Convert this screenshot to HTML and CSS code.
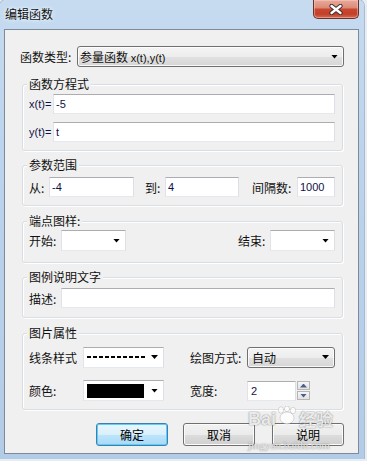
FILE: index.html
```html
<!DOCTYPE html>
<html lang="zh-CN">

<head>
  <meta charset="UTF-8">
  <meta name="viewport" content="width=device-width, initial-scale=1.0">
  <title>编辑函数</title>
  <link rel="stylesheet" href="styles.css">
</head>

<body>
  <div class="window">
    <div class="titlebar">
      <span class="title">编辑函数</span>
      <button class="close-btn" type="button">
        <svg width="14" height="11" viewBox="0 0 14 11">
          <path d="M2.5 2 L11.5 9 M11.5 2 L2.5 9" stroke="#3a2c2c" stroke-width="4.2" stroke-linecap="round" fill="none" />
          <path d="M2.5 2 L11.5 9 M11.5 2 L2.5 9" stroke="#fff" stroke-width="2.4" stroke-linecap="round" fill="none" />
        </svg>
      </button>
    </div>

    <div class="client">
      <!-- function type -->
      <div class="type-row">
        <span class="type-label">函数类型:</span>
        <div class="combo btn-combo type-combo">
          <span>参量函数 <span class="latin">x(t),y(t)</span></span>
          <i class="arrow"></i>
        </div>
      </div>

      <!-- equations -->
      <div class="group group-eq">
        <div class="group-title">函数方程式</div>
        <div class="row">
          <span class="eq-label latin">x(t)=</span>
          <input class="edit eq-edit" type="text" value="-5">
        </div>
        <div class="row row-second">
          <span class="eq-label latin">y(t)=</span>
          <input class="edit eq-edit" type="text" value="t">
        </div>
      </div>

      <!-- parameter range -->
      <div class="group group-range">
        <div class="group-title">参数范围</div>
        <div class="row">
          <span class="range-label">从:</span>
          <input class="edit from-edit" type="text" value="-4">
          <span class="range-label to-label">到:</span>
          <input class="edit to-edit" type="text" value="4">
          <span class="step-label">间隔数:</span>
          <input class="edit step-edit" type="text" value="1000">
        </div>
      </div>

      <!-- end point style -->
      <div class="group group-ends">
        <div class="group-title">端点图样:</div>
        <div class="row row-split">
          <div class="pair">
            <span class="short-label">开始:</span>
            <div class="combo end-combo"><span></span><i class="arrow"></i></div>
          </div>
          <div class="pair">
            <span class="short-label">结束:</span>
            <div class="combo end-combo"><span></span><i class="arrow"></i></div>
          </div>
        </div>
      </div>

      <!-- legend text -->
      <div class="group group-legend">
        <div class="group-title">图例说明文字</div>
        <div class="row">
          <span class="short-label">描述:</span>
          <input class="edit desc-edit" type="text" value="">
        </div>
      </div>

      <!-- picture properties -->
      <div class="group group-props">
        <div class="group-title">图片属性</div>
        <div class="row">
          <span class="prop-label">线条样式</span>
          <div class="combo prop-combo">
            <span class="dash-line"></span>
            <i class="arrow"></i>
          </div>
          <span class="prop-label2">绘图方式:</span>
          <div class="combo btn-combo draw-combo">
            <span>自动</span>
            <i class="arrow"></i>
          </div>
        </div>
        <div class="row row-color">
          <span class="prop-label">颜色:</span>
          <div class="combo prop-combo color-combo">
            <span class="swatch"></span>
            <i class="arrow"></i>
          </div>
          <span class="prop-label2">宽度:</span>
          <input class="edit width-edit" type="text" value="2">
          <div class="spin">
            <span class="spin-btn"><i class="spin-up"></i></span>
            <span class="spin-btn"><i class="spin-down"></i></span>
          </div>
        </div>
      </div>

      <div class="buttons">
        <button class="btn btn-default" type="button">确定</button>
        <button class="btn btn-cancel" type="button">取消</button>
        <button class="btn btn-help" type="button">说明</button>
      </div>
    </div>

    <!-- watermark of the screenshot source -->
    <div class="watermark">
      <div class="wm-logo">
        <span>Bai</span>
        <svg width="22" height="20" viewBox="0 0 22 20">
          <ellipse cx="5" cy="4" rx="2.6" ry="3.2" />
          <ellipse cx="11" cy="2.8" rx="2.6" ry="2.8" />
          <ellipse cx="17" cy="4.5" rx="2.6" ry="3.2" />
          <ellipse cx="11" cy="12" rx="7" ry="6" />
        </svg>
        <span>经验</span>
      </div>
      <div class="wm-url">jingyan.baidu.com</div>
    </div>
  </div>
</body>

</html>
```

FILE: styles.css
```css
* {
  box-sizing: border-box;
}

body {
  margin: 0;
  background: #e6edf5;
  font-family: "Noto Sans CJK SC", "Noto Sans", sans-serif;
  font-size: 12px;
  color: #111;
}

.latin {
  font-family: "Liberation Sans", Arial, sans-serif;
  font-size: 11px;
}

.window {
  position: relative;
  width: 364px;
  height: 459px;
  padding: 0 5px 5px 4px;
  background: linear-gradient(180deg, #c6dbf0 0%, #bcd4ed 30%, #b2cce8 100%);
  border-radius: 6px 6px 0 0;
  box-shadow: 0 0 0 1px rgba(70, 90, 120, 0.35);
}

.titlebar {
  height: 29px;
  display: flex;
  justify-content: space-between;
  align-items: flex-start;
}

.title {
  margin: 6px 0 0 1px;
  line-height: 16px;
  text-shadow: 0 0 5px #eef5fc, 0 0 3px #eef5fc;
}

.close-btn {
  width: 46px;
  height: 19px;
  padding: 0;
  border: 1px solid #6b3127;
  border-top: none;
  border-radius: 0 0 5px 5px;
  background: linear-gradient(180deg, #e7ab9d 0%, #dd8b79 42%, #c8472f 52%, #c34029 78%, #d26b53 100%);
  box-shadow: inset 0 0 0 1px rgba(255, 210, 200, 0.45);
  display: flex;
  align-items: center;
  justify-content: center;
}

.client {
  height: 425px;
  background: #f0f0f0;
  border: 1px solid #7d8b99;
}

/* function type row */
.type-row {
  display: flex;
  align-items: center;
  margin-top: 16px;
  padding-left: 15px;
}

.type-label {
  width: 57px;
}

.type-combo {
  width: 267px;
}

/* combos */
.combo {
  display: flex;
  align-items: center;
  justify-content: space-between;
  height: 21px;
  padding: 0 5px 0 3px;
  background: #fff;
  border: 1px solid;
  border-color: #abadb3 #dbdfe6 #e3e9ef #e2e3ea;
}

.btn-combo {
  padding-left: 2px;
  border: 1px solid #707070;
  border-radius: 3px;
  background: linear-gradient(180deg, #f4f4f4 0%, #ededed 50%, #e1e1e1 51%, #d6d6d6 100%);
  box-shadow: inset 0 0 0 1px rgba(255, 255, 255, 0.8);
}

.arrow {
  display: block;
  width: 7px;
  height: 4px;
  background: #000;
  clip-path: polygon(0 0, 100% 0, 50% 100%);
}

/* group boxes */
.group {
  margin-left: 17px;
  width: 321px;
  padding: 0 7px 0 6px;
  border: 1px solid #d5dfe5;
  border-radius: 3px;
  box-shadow: inset 1px 1px 0 #fff, 1px 1px 0 #fff;
}

.group-title {
  width: fit-content;
  margin: -9px 0 0 -2px;
  padding: 0 2px;
  line-height: 16px;
  background: #f0f0f0;
}

.group-eq {
  margin-top: 17px;
  padding-bottom: 8px;
}

.group-eq .row {
  margin-top: 2px;
}

.group-eq .row-second {
  margin-top: 8px;
}

.group-range {
  margin-top: 14px;
  padding-bottom: 8px;
}

.group-range .row {
  margin-top: 4px;
}

.group-ends {
  margin-top: 15px;
  padding-bottom: 11px;
}

.group-ends .row {
  margin-top: 1px;
  height: 21px;
}

.group-legend {
  margin-top: 14px;
  padding-bottom: 9px;
}

.group-legend .row {
  margin-top: 3px;
}

.group-props {
  margin-top: 15px;
  padding-bottom: 8px;
}

.group-props .row {
  margin-top: 6px;
}

.group-props .row-color {
  margin-top: 13px;
  height: 21px;
}

.row {
  display: flex;
  align-items: center;
  height: 20px;
}

.row-split {
  justify-content: space-between;
}

.pair {
  display: flex;
  align-items: center;
}

/* text boxes */
.edit {
  height: 20px;
  margin: 0;
  padding: 0 0 0 2px;
  background: #fff;
  border: 1px solid;
  border-color: #abadb3 #dbdfe6 #e3e9ef #e2e3ea;
  font-family: "Liberation Sans", Arial, sans-serif;
  font-size: 11px;
  color: #10104a;
  outline: none;
}

.eq-label {
  width: 24px;
  color: #10104a;
}

.eq-edit,
.desc-edit {
  flex: 1;
  min-width: 0;
}

.range-label {
  width: 20px;
}

.to-label {
  margin-left: 11px;
}

.step-label {
  width: 45px;
  margin-left: 13px;
}

.from-edit {
  width: 85px;
}

.to-edit {
  width: 74px;
}

.step-edit {
  width: 38px;
}

.short-label {
  width: 32px;
}

.end-combo {
  width: 65px;
}

/* picture properties */
.prop-label {
  width: 54px;
}

.prop-label2 {
  width: 57px;
  margin-left: 26px;
}

.prop-combo {
  width: 81px;
}

.draw-combo {
  width: 88px;
  padding-left: 4px;
}

.dash-line {
  display: block;
  width: 58px;
  height: 2px;
  background: repeating-linear-gradient(90deg, #000 0 4px, transparent 4px 6px);
}

.swatch {
  display: block;
  width: 57px;
  height: 14px;
  background: #000;
}

.width-edit {
  width: 49px;
  padding-left: 3px;
}

.spin {
  display: flex;
  flex-direction: column;
  gap: 1px;
  margin-left: 1px;
}

.spin-btn {
  display: flex;
  align-items: center;
  justify-content: center;
  width: 13px;
  height: 9px;
  border: 1px solid #b6b6b6;
  background: linear-gradient(180deg, #f6f6f6, #e2e2e2);
}

.spin-up,
.spin-down {
  display: block;
  width: 7px;
  height: 4px;
  background: #4a5f8c;
}

.spin-up {
  clip-path: polygon(50% 0, 100% 100%, 0 100%);
}

.spin-down {
  clip-path: polygon(0 0, 100% 0, 50% 100%);
}

/* dialog buttons */
.buttons {
  display: flex;
  margin-top: 13px;
  padding-left: 91px;
}

.btn {
  width: 72px;
  height: 23px;
  padding: 0;
  border: 1px solid #707070;
  border-radius: 3px;
  background: linear-gradient(180deg, #f2f2f2 0%, #ebebeb 50%, #dddddd 51%, #cfcfcf 100%);
  box-shadow: inset 0 0 0 1px #fbfbfb;
  font-family: "Noto Sans CJK SC", sans-serif;
  font-size: 12px;
  color: #000;
}

.btn-default {
  border-color: #3c7fb1;
  background: linear-gradient(180deg, #eaf6fd 0%, #d9f0fc 50%, #bee6fd 51%, #a7d9f5 100%);
  box-shadow: inset 0 0 0 1px #5fcdf6;
}

.btn-cancel {
  margin-left: 15px;
}

.btn-help {
  margin-left: 17px;
}

/* faint watermark over the bottom right corner */
.watermark {
  position: absolute;
  left: 248px;
  top: 406px;
  color: rgba(255, 255, 255, 0.85);
  text-shadow: 0 0 1px rgba(60, 60, 60, 0.6), 0 0 2px rgba(120, 120, 120, 0.4);
}

.wm-logo {
  display: flex;
  align-items: flex-end;
  font-family: "Liberation Sans", sans-serif;
  font-weight: bold;
  font-size: 18px;
  line-height: 22px;
}

.wm-logo svg {
  fill: rgba(255, 255, 255, 0.8);
  stroke: rgba(90, 90, 90, 0.35);
  stroke-width: 0.6;
  margin: 0 1px 4px 0;
}

.wm-logo span:last-child {
  font-family: "Noto Sans CJK SC", sans-serif;
  font-size: 17px;
}

.wm-url {
  margin-top: 9px;
  font-family: "Liberation Serif", serif;
  font-size: 11px;
  line-height: 12px;
}
```
